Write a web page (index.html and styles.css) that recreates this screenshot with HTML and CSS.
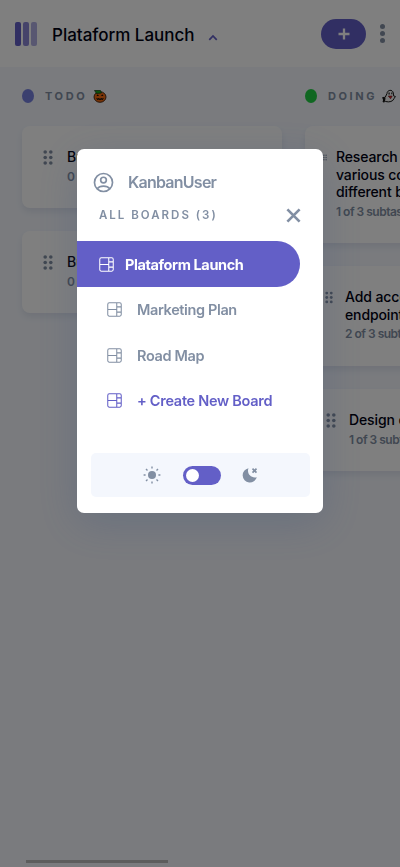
FILE: index.html
```html
<!DOCTYPE html>
<html lang="en">
<head>
<meta charset="utf-8">
<title>Kanban</title>
<link rel="stylesheet" href="styles.css">
</head>
<body>
<svg width="0" height="0" class="defs">
  <symbol id="board" viewBox="0 0 16 16"><path d="M2.5.9h11a1.7 1.7 0 0 1 1.7 1.7v10.8a1.7 1.7 0 0 1-1.7 1.7h-11A1.7 1.7 0 0 1 .8 13.400V2.600A1.7 1.7 0 0 1 2.500.9zM10.400.9v14.200M.8 8h9.600M10.400 5.200h4.800M10.400 10.800h4.800" fill="none" stroke="currentColor" stroke-width="1.100"/></symbol>
  <symbol id="grip" viewBox="0 0 10 15"><g fill="currentColor"><circle cx="2.200" cy="2" r="1.800"/><circle cx="7.800" cy="2" r="1.800"/><circle cx="2.200" cy="7.500" r="1.800"/><circle cx="7.800" cy="7.500" r="1.800"/><circle cx="2.200" cy="13" r="1.800"/><circle cx="7.800" cy="13" r="1.800"/></g></symbol>
</svg>
<div class="app">
  <header class="header">
    <div class="logo"><i></i><i></i><i></i></div>
    <h1><span>Plataform Launch</span></h1>
    <svg class="chevron" viewBox="0 0 8 6"><path d="M.8 5 4 1.700 7.200 5" fill="none" stroke="currentColor" stroke-width="1.500"/></svg>
    <div class="add"><svg viewBox="0 0 12 12"><path d="M6 .5v11M.5 6h11" stroke="currentColor" stroke-width="2.300"/></svg></div>
    <div class="dots"><i></i><i></i><i></i></div>
  </header>
  <main class="columns">
    <section class="column">
      <h2><i class="dot todo"></i><span class="t-todo">TODO</span>
        <svg class="emoji" viewBox="0 0 14 14"><ellipse cx="7" cy="8" rx="6" ry="5.300" fill="#f56a10" stroke="#3a2012" stroke-width=".9"/><path d="M1.500 1.500h6l1 2.500-5 .5z" fill="#16a51e" stroke="#143510" stroke-width=".7"/><path d="m3.500 7 1.200-1.700L6 7zm4.500 0 1.300-1.700L10.500 7zM3 8.800l1.700.7.9-.5 1.400.7 1.400-.7.9.5 1.700-.7-1.500 2.400-1.100-.7-1.400.8-1.400-.8-1.100.7z" fill="#1c120c"/></svg></h2>
      <article class="card short"><svg class="grip"><use href="#grip"/></svg><div><h3>Build UI</h3><p>0 of 3</p></div></article>
      <article class="card short"><svg class="grip"><use href="#grip"/></svg><div><h3>Build set</h3><p>0 of 2</p></div></article>
    </section>
    <section class="column">
      <h2><i class="dot doing"></i><span class="t-doing">DOING</span>
        <svg class="emoji ghost" viewBox="0 0 14 14"><path d="M5 4.500C5 1 10.500-.2 11.300 4c.2 1 .1 2 .3 2.900l1.800.6-1.300 2C11 12.500 7.500 13.500 3.500 12.500L1 13l.8-2L.7 8.500l2.500-.2z" fill="#f2f2f2" stroke="#151515"/><path d="M6.500 3.500h1.200v2H6.500zm2.800 0h1v1.700h-1zM.8 8.500l2.700.3-.4 3.200L1 13z" fill="#151515"/><path d="M6.200 7h4L8.600 9.800z" fill="#e5252c" stroke="#411" stroke-width=".5"/></svg></h2>
      <article class="card c1"><svg class="grip"><use href="#grip"/></svg><div><h3>Research pricing<br>various competitors<br>different business</h3><p>1 of 3 subtasks</p></div></article>
      <article class="card c2"><svg class="grip"><use href="#grip"/></svg><div><h3>Add account<br>endpoints</h3><p>2 of 3 subtasks</p></div></article>
      <article class="card c3"><svg class="grip"><use href="#grip"/></svg><div><h3>Design onboarding</h3><p>1 of 3 subtasks</p></div></article>
    </section>
  </main>
  <div class="scrollbar"></div>
</div>
<div class="overlay">
  <div class="modal">
    <div class="user"><svg viewBox="0 0 20 20"><g fill="none" stroke="currentColor" stroke-width="1.600"><circle cx="10" cy="10" r="8.600"/><circle cx="10" cy="7.700" r="2.700"/><path d="M4 16c2.500-3.300 9.500-3.300 12 0"/></g></svg><span>KanbanUser</span></div>
    <div class="all"><span>ALL BOARDS (3)</span><svg viewBox="0 0 14 14"><path d="m1.300 1.300 11.400 11.400m0-11.400L1.300 12.700" stroke="currentColor" stroke-width="2.500"/></svg></div>
    <nav>
      <a class="active"><svg><use href="#board"/></svg><span class="n1">Plataform Launch</span></a>
      <a><svg><use href="#board"/></svg><span class="n2">Marketing Plan</span></a>
      <a><svg><use href="#board"/></svg><span class="n3">Road Map</span></a>
      <a class="create"><svg><use href="#board"/></svg><span class="n4">+ Create New Board</span></a>
    </nav>
    <div class="theme">
      <svg class="sun" viewBox="0 0 18 18"><circle cx="9" cy="9" r="4" fill="currentColor"/><path d="M9 .6v2M9 15.400v2M.6 9h2M15.400 9h2M3 3l1.500 1.500M13.500 13.500 15 15M15 3l-1.500 1.500M4.500 13.500 3 15" stroke="currentColor" stroke-width="1.400"/></svg>
      <div class="switch"><i></i></div>
      <svg class="moon" viewBox="0 0 16 16"><path d="M6.500 1.200C4.500 6 8.500 11.500 14.800 10.200A7.200 7.200 0 1 1 6.500 1.200z" fill="currentColor"/><path d="m10.500 1.700 4 4m0-4-4 4" stroke="currentColor" stroke-width="1.700"/></svg>
    </div>
  </div>
</div>
</body>
</html>
```
FILE: styles.css
```css
* { box-sizing: border-box; margin: 0; padding: 0; }
html, body { height: 100%; overflow: hidden; }
body { font-family: "Inter", sans-serif; font-weight: 600; color: #828fa3; }
svg { display: block; flex: none; }
i { display: block; }
span { white-space: nowrap; }
.defs { position: absolute; }
.app { width: 400px; height: 867px; background: #f4f7fd; overflow: hidden; display: flex; flex-direction: column; }
.header { height: 67px; background: #fff; flex: none; display: flex; align-items: center; padding-left: 15px; }
.logo { display: flex; gap: 2px; width: 37px; }
.logo i { width: 6px; height: 24px; border-radius: 2px; background: #635fc7; }
.logo i:nth-child(2) { opacity: .75; }
.logo i:nth-child(3) { opacity: .5; }
h1 { width: 156px; font-size: 17px; line-height: 24px; font-weight: 500; color: #000112; letter-spacing: -.02px; margin-top: 2px; }
.chevron { width: 10px; height: 7px; color: #635fc7; margin-top: 8px; }
.add { margin-left: 103px; width: 45px; height: 30px; border-radius: 15px; background: #635fc7; color: #fff; display: flex; align-items: center; justify-content: center; }
.add svg { width: 12px; height: 12px; }
.dots { margin-left: 14px; display: grid; gap: 2px; }
.dots i { width: 5px; height: 5px; border-radius: 50%; background: #828fa3; }
.columns { flex: 1; display: flex; gap: 23px; padding: 21px 0 0 22px; }
.column { width: 260px; flex: none; }
h2 { height: 16px; display: flex; align-items: center; font-size: 11px; letter-spacing: 2.6px; margin-bottom: 22px; }
.dot { width: 12px; height: 14px; border-radius: 50%; margin-right: 11px; }
.todo { background: #7780df; }
.doing { background: #21cf43; }
.t-todo { width: 48px; }
.t-doing { width: 54px; }
.emoji { width: 14px; height: 14px; }
.card { background: #fff; border-radius: 8px; box-shadow: 0 4px 6px rgba(54, 78, 126, .1); margin-bottom: 23px; display: flex; padding: 22px 0 0 21px; white-space: nowrap; overflow: hidden; }
.grip { width: 10px; height: 15px; margin: 2px 14px 0 0; color: #828fa3; }
h3 { font-size: 14px; line-height: 17.7px; font-weight: 500; color: #000112; letter-spacing: -.12px; }
.card p { font-size: 12px; line-height: 17px; margin-top: 2px; letter-spacing: -.5px; }
.short { height: 82px; }
.c1 { height: 117px; padding-left: 18px; }
.c1 .grip { width: 4px; margin-right: 9px; }
.c2 { height: 100px; padding-left: 20px; }
.c2 .grip { width: 8px; margin-right: 12px; }
.c3 { height: 82px; }
.c3 .grip { margin-right: 13px; }
.scrollbar { width: 142px; height: 3px; background: #bababa; margin: 0 0 4px 26px; }
.overlay { position: fixed; top: 0; left: 0; width: 400px; height: 867px; background: rgba(0, 0, 0, .5); display: flex; align-items: flex-start; justify-content: center; padding-top: 149px; }
.modal { width: 246px; height: 364px; border-radius: 7px; background: #fff; box-shadow: 0 10px 40px rgba(54, 78, 126, .25); padding-top: 22px; }
.user { height: 22px; display: flex; align-items: center; padding-left: 16px; font-size: 16px; }
.user svg { width: 21px; height: 21px; margin-right: 14px; }
.user span { letter-spacing: -.75px; }
.all { height: 22px; display: flex; align-items: center; justify-content: space-between; padding: 0 22px; margin-top: 11px; font-size: 11.5px; letter-spacing: 2px; }
.all svg { width: 15px; height: 15px; }
nav { margin-top: 15px; }
nav a { display: flex; align-items: center; height: 45.400px; padding-left: 30px; font-size: 14.5px; }
nav svg { width: 15px; height: 15px; margin-right: 15px; }
nav .active { width: 223px; height: 46px; background: #635fc7; color: #fff; border-radius: 0 23px 23px 0; padding-left: 22px; font-weight: 700; }
nav .active svg { margin-right: 11px; }
nav .create { color: #635fc7; }
.n1 { letter-spacing: -.4px; }
.n2, .n3 { letter-spacing: -.37px; }
.n4 { letter-spacing: -.28px; }
.theme { margin: 30px 13px 0 14px; height: 44px; border-radius: 5px; background: #f4f7fd; display: flex; align-items: center; justify-content: center; }
.sun { width: 18px; height: 18px; }
.switch { width: 38px; height: 19px; border-radius: 10px; background: #635fc7; margin: 0 21px 0 22px; padding: 3px; }
.switch i { width: 13px; height: 13px; border-radius: 50%; background: #fff; }
.moon { width: 16px; height: 16px; }
```
